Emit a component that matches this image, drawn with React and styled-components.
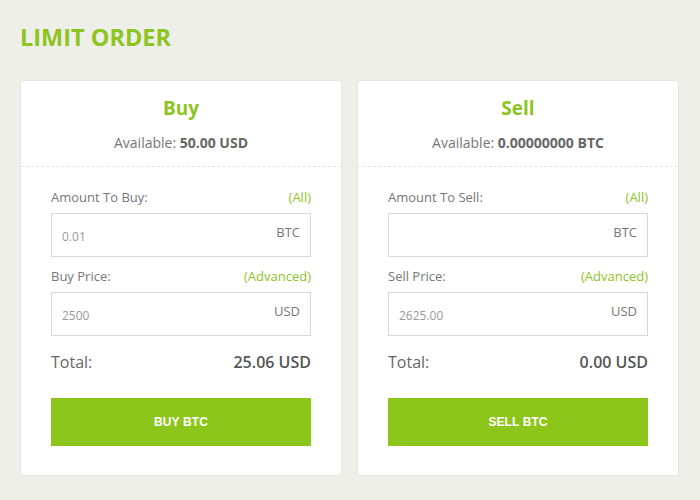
import React from "react";
import styled, { createGlobalStyle } from "styled-components";

const Global = createGlobalStyle`
  html, body { margin: 0; padding: 0; background: #efefea; }
  body { font-family: "Open Sans", "Liberation Sans", sans-serif; }
  * { box-sizing: border-box; }
`;

const Page = styled.div`
  width: 700px;
  height: 500px;
  padding: 22px 20px 0 20px;
  background: #efefea;
`;

const Title = styled.h1`
  margin: 0 0 21px 0;
  height: 37px;
  font-size: 23.5px;
  line-height: 31px;
  font-weight: 700;
  color: #8dc41f;
`;

const Columns = styled.div`
  display: grid;
  grid-template-columns: 322px 322px;
  column-gap: 15px;
`;

const Card = styled.div`
  background: #fff;
  border: 1px solid #e6e6e1;
  border-radius: 4px;
  height: 396px;
`;

const Head = styled.div`
  padding-top: 13px;
  height: 86px;
  border-bottom: 1px dashed #e4e4e4;
  text-align: center;
`;

const Heading = styled.div`
  font-size: 19px;
  line-height: 28px;
  font-weight: 700;
  color: #8dc41f;
`;

const Avail = styled.div`
  margin-top: 11px;
  font-size: 14px;
  line-height: 20px;
  color: #777;
  b { font-weight: 700; color: #666; }
`;

const Body = styled.div`
  padding: 21px 30px 0 30px;
`;

const LabelRow = styled.div`
  display: flex;
  justify-content: space-between;
  font-size: 13px;
  line-height: 18px;
  color: #777;
  margin-bottom: 7px;
`;

const Link = styled.span`
  color: #8dc41f;
`;

const Field = styled.div`
  display: flex;
  justify-content: space-between;
  height: 44px;
  border: 1px solid #d8d8d8;
  padding: 0 10px 0 10px;
  margin-bottom: 10px;
`;

const Value = styled.span`
  font-size: 12px;
  color: #999;
  line-height: 18px;
  padding-top: 14px;
`;

const Unit = styled.span`
  font-size: 13px;
  color: #777;
  line-height: 18px;
  padding-top: 9px;
`;

const TotalRow = styled.div`
  display: flex;
  justify-content: space-between;
  font-size: 16px;
  line-height: 22px;
  color: #666;
  margin-top: 15px;
  b { font-weight: 600; color: #555; }
`;

const Button = styled.button`
  display: block;
  width: 100%;
  height: 48px;
  margin-top: 25px;
  border: none;
  background: #8dc61a;
  color: #fff;
  font-family: "Liberation Sans", Arial, sans-serif;
  font-weight: 700;
  font-size: 12px;
  letter-spacing: 0.1px;
`;

function Panel({ title, avail, amountLabel, amount, priceLabel, price, total, action }) {
  return (
    <Card>
      <Head>
        <Heading>{title}</Heading>
        <Avail>
          Available: <b>{avail}</b>
        </Avail>
      </Head>
      <Body>
        <LabelRow>
          <span>{amountLabel}</span>
          <Link>(All)</Link>
        </LabelRow>
        <Field>
          <Value>{amount}</Value>
          <Unit>BTC</Unit>
        </Field>
        <LabelRow>
          <span>{priceLabel}</span>
          <Link>(Advanced)</Link>
        </LabelRow>
        <Field>
          <Value>{price}</Value>
          <Unit>USD</Unit>
        </Field>
        <TotalRow>
          <span>Total:</span>
          <b>{total}</b>
        </TotalRow>
        <Button>{action}</Button>
      </Body>
    </Card>
  );
}

export default function App() {
  return (
    <Page>
      <Global />
      <Title>LIMIT ORDER</Title>
      <Columns>
        <Panel
          title="Buy"
          avail="50.00 USD"
          amountLabel="Amount To Buy:"
          amount="0.01"
          priceLabel="Buy Price:"
          price="2500"
          total="25.06 USD"
          action="BUY BTC"
        />
        <Panel
          title="Sell"
          avail="0.00000000 BTC"
          amountLabel="Amount To Sell:"
          amount=""
          priceLabel="Sell Price:"
          price="2625.00"
          total="0.00 USD"
          action="SELL BTC"
        />
      </Columns>
    </Page>
  );
}
